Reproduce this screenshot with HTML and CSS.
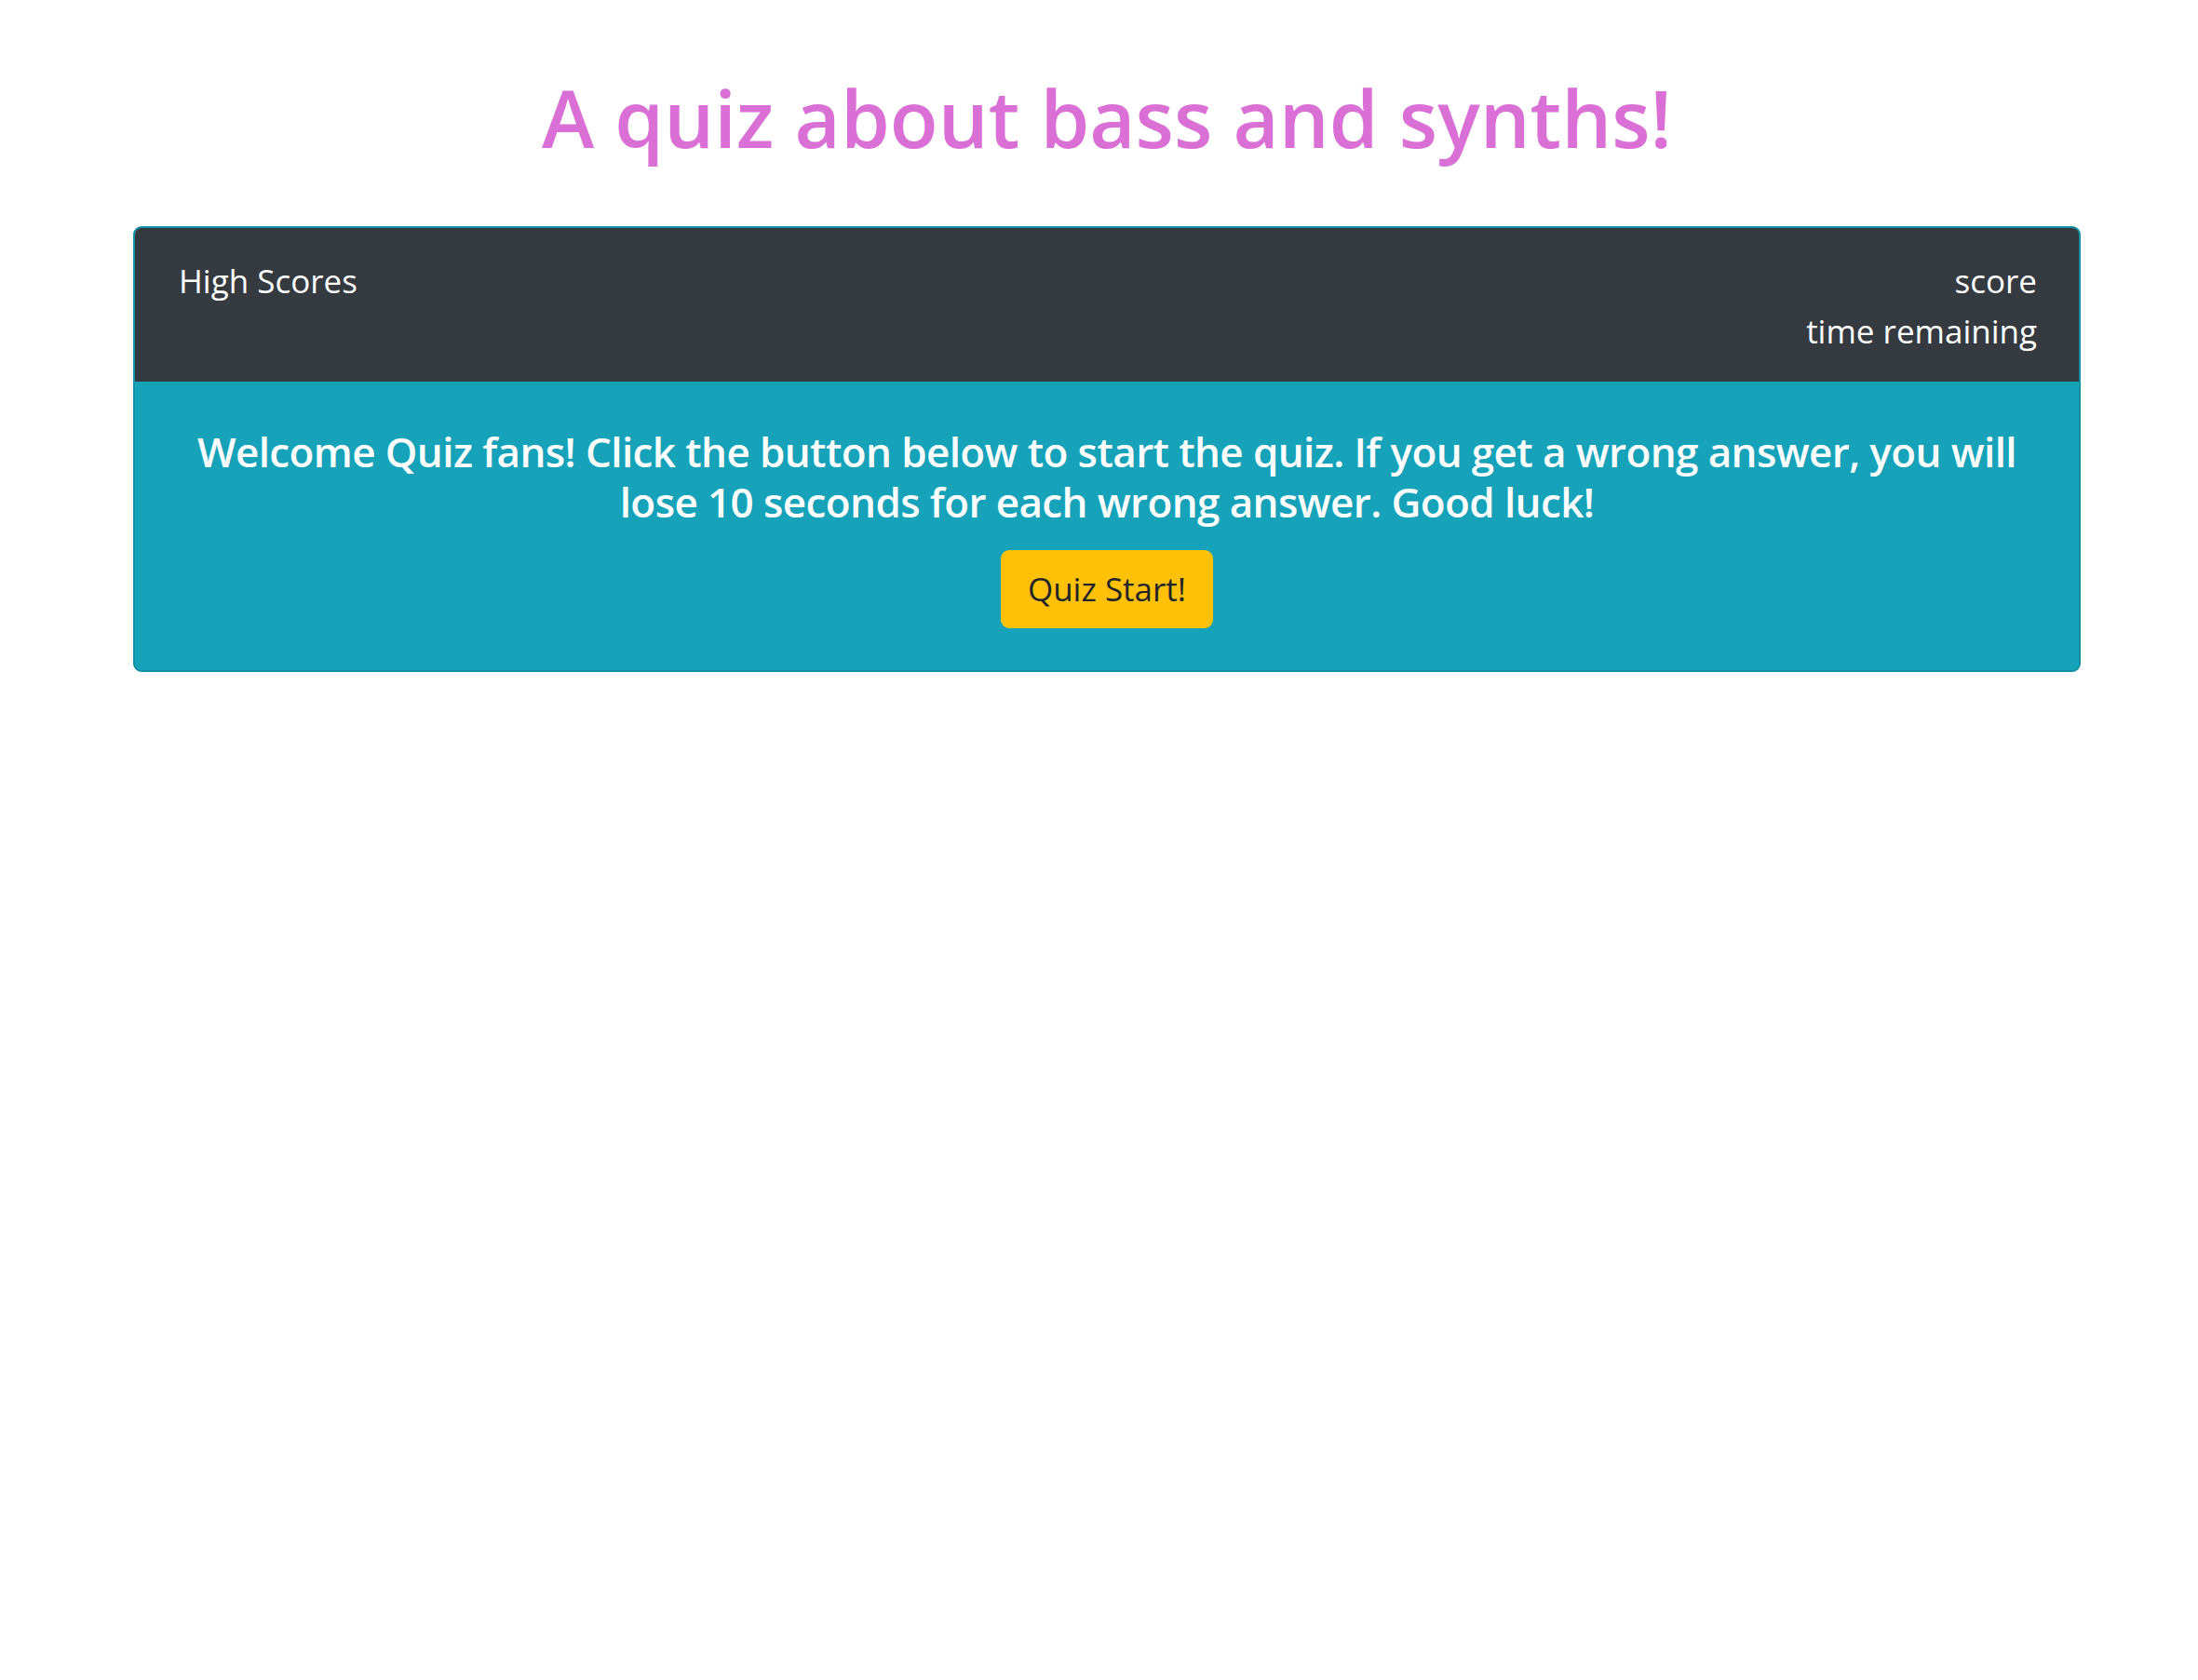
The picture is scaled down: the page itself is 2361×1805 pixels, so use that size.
FILE: index.html
```html
<!DOCTYPE html>
<html lang="en">
<head>
<meta charset="utf-8">
<title>Bass and Synth Quiz</title>
<link rel="stylesheet" href="styles.css">
</head>
<body>
<main class="page">
  <h1 class="title">A quiz about bass and synths!</h1>
  <section class="card">
    <header class="card-header">
      <div class="high-scores">High Scores</div>
      <div class="stats">
        <div>score</div>
        <div>time remaining</div>
      </div>
    </header>
    <div class="card-body">
      <h5 class="welcome">Welcome Quiz fans! Click the button below to start the quiz. If you get a wrong answer, you will lose 10 seconds for each wrong answer. Good luck!</h5>
      <button class="btn-start" type="button">Quiz Start!</button>
    </div>
  </section>
</main>
</body>
</html>
```
FILE: styles.css
```css
html, body {
  margin: 0;
  padding: 0;
  background: #ffffff;
}
body {
  font-family: "Open Sans", "Noto Sans", sans-serif;
  color: #212529;
}
.page {
  padding: 0 126px 0 143px;
}
.title {
  margin: 72px 0 63px;
  font-size: 85px;
  line-height: 108px;
  font-weight: 600;
  color: #da70d6;
  text-align: center;
}
.card {
  border: 2px solid #1391a2;
  border-radius: 9px;
  overflow: hidden;
  background: #16a2b8;
}
.card-header {
  display: flex;
  justify-content: space-between;
  align-items: flex-start;
  background: #343a40;
  color: #ffffff;
  padding: 30px 45px 27px 47px;
  font-size: 35px;
  line-height: 54px;
}
.stats {
  text-align: right;
}
.card-body {
  padding: 48px 45px 45px;
  text-align: center;
  color: #ffffff;
}
.welcome {
  margin: 0 0 25px;
  font-size: 44px;
  line-height: 54px;
  font-weight: 600;
  letter-spacing: -0.6px;
}
.btn-start {
  display: inline-block;
  height: 84px;
  padding: 0 27px;
  border: 2px solid #ffc107;
  border-radius: 9px;
  background: #ffc107;
  color: #212529;
  font-family: "Open Sans", "Noto Sans", sans-serif;
  font-size: 35px;
  line-height: 80px;
  vertical-align: top;
}
```
